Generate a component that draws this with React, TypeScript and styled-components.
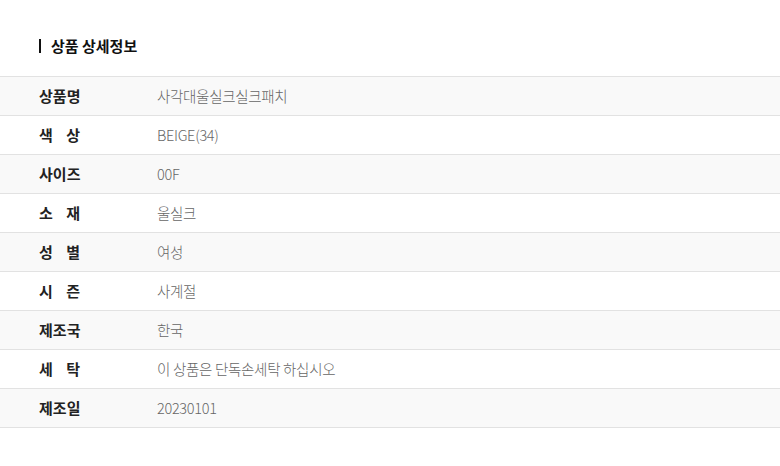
import React from "react";
import styled, { createGlobalStyle } from "styled-components";

const rows: { label: string; value: string }[] = [
  { label: "상품명", value: "사각대울실크실크패치" },
  { label: "색상", value: "BEIGE(34)" },
  { label: "사이즈", value: "00F" },
  { label: "소재", value: "울실크" },
  { label: "성별", value: "여성" },
  { label: "시즌", value: "사계절" },
  { label: "제조국", value: "한국" },
  { label: "세탁", value: "이 상품은 단독손세탁 하십시오" },
  { label: "제조일", value: "20230101" },
];

const App = () => {
  return (
    <>
      <GlobalStyle />
      <Section>
        <Heading>상품 상세정보</Heading>
        <Table>
          {rows.map((row, i) => (
            <Row key={row.label} striped={i % 2 === 0}>
              <LabelCell>
                <Label>
                  {row.label.split("").map((ch, j) => (
                    <span key={j}>{ch}</span>
                  ))}
                </Label>
              </LabelCell>
              <Value>{row.value}</Value>
            </Row>
          ))}
        </Table>
      </Section>
    </>
  );
};

export default App;

const GlobalStyle = createGlobalStyle`
  body {
    margin: 0;
    background: #fff;
    font-family: "Noto Sans CJK KR", "Noto Sans", sans-serif;
  }
`;

const Section = styled.section`
  padding-top: 36px;
`;

const Heading = styled.h3`
  margin: 0 0 20px 39px;
  display: flex;
  align-items: center;
  gap: 10px;
  font-size: 15px;
  font-weight: 700;
  color: #111;
  line-height: 20px;

  &::before {
    content: "";
    width: 2px;
    height: 14px;
    background: #111;
  }
`;

const Table = styled.div`
  border-top: 1px solid #e2e2e2;
`;

const Row = styled.div<{ striped: boolean }>`
  display: flex;
  align-items: center;
  height: 38px;
  padding-left: 39px;
  border-bottom: 1px solid #e2e2e2;
  background: ${(p) => (p.striped ? "#f9f9f9" : "#fff")};
`;

const LabelCell = styled.div`
  flex: 0 0 118px;
`;

const Label = styled.div`
  display: flex;
  justify-content: space-between;
  width: 41px;
  font-size: 15px;
  font-weight: 700;
  color: #222;
  line-height: 20px;
`;

const Value = styled.span`
  font-size: 14.5px;
  font-weight: 300;
  letter-spacing: -0.3px;
  color: #666;
  line-height: 20px;
`;
